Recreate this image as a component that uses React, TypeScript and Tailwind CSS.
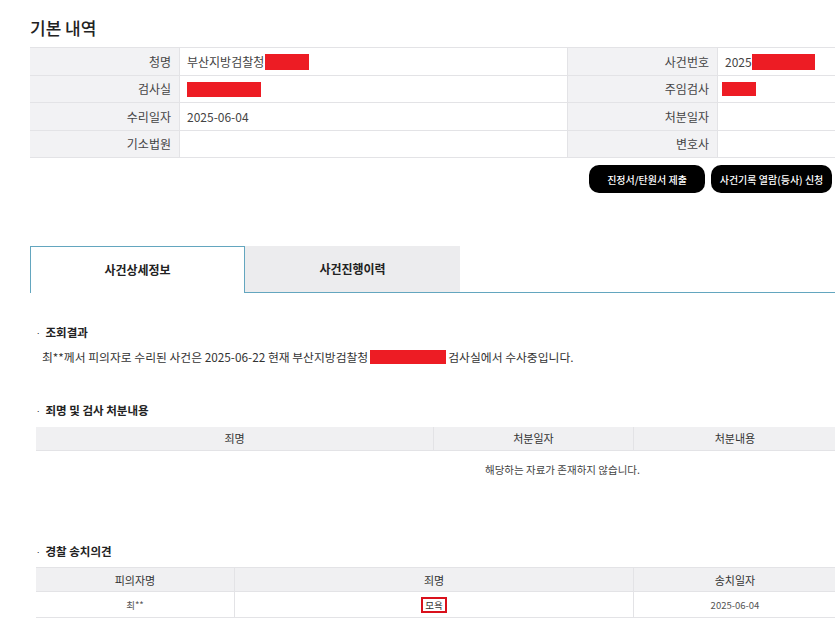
const FONT = "font-['Noto_Sans_CJK_KR','Noto_Sans',sans-serif]";

function Redact({ className }: { className: string }) {
  return <span className={`inline-block bg-[#ed1c24] ${className}`} />;
}

function InfoRow({
  label1,
  value1,
  label2,
  value2,
}: {
  label1: string;
  value1?: React.ReactNode;
  label2: string;
  value2?: React.ReactNode;
}) {
  const label =
    "flex items-center justify-end pr-[8px] bg-[#f2f2f4] text-[12px] text-[#444] border-b border-[#e3e3e6]";
  const value =
    "flex items-center pl-[7px] text-[12px] text-[#444] border-b border-[#e3e3e6]";
  return (
    <>
      <div className={`${label} border-r`}>{label1}</div>
      <div className={`${value} border-r`}>{value1}</div>
      <div className={`${label} border-r`}>{label2}</div>
      <div className={value}>{value2}</div>
    </>
  );
}

function SectionTitle({ children }: { children: React.ReactNode }) {
  return (
    <div className="flex items-center gap-[5px] pl-[36px] text-[11.5px] font-bold text-[#222]">
      <span className="text-[8px] font-normal">·</span>
      {children}
    </div>
  );
}

export default function App() {
  return (
    <div className={`w-[835px] h-[627px] overflow-hidden bg-white ${FONT}`}>
      <h1 className="pl-[30px] pt-[16px] text-[17px] font-medium text-[#222] leading-[24px]">
        기본 내역
      </h1>

      <div className="mt-[7px] ml-[30px] grid grid-cols-[150px_388px_150px_1fr] grid-rows-[28px_27px_28px_27px] border-t border-[#e3e3e6]">
        <InfoRow
          label1="청명"
          value1={
            <span className="flex items-center">
              부산지방검찰청
              <Redact className="w-[44px] h-[16px] ml-[1px]" />
            </span>
          }
          label2="사건번호"
          value2={
            <span className="flex items-center">
              2025
              <Redact className="w-[63px] h-[16px]" />
            </span>
          }
        />
        <InfoRow
          label1="검사실"
          value1={<Redact className="w-[74px] h-[15px]" />}
          label2="주임검사"
          value2={<Redact className="w-[34px] h-[14px] -ml-[3px]" />}
        />
        <InfoRow label1="수리일자" value1="2025-06-04" label2="처분일자" />
        <InfoRow label1="기소법원" label2="변호사" />
      </div>

      <div className="flex justify-end gap-[6px] pr-[3px] mt-[7px]">
        <button className="w-[116px] h-[28px] rounded-[10px] bg-black text-white text-[10px] font-medium">
          진정서/탄원서 제출
        </button>
        <button className="w-[121px] h-[28px] rounded-[10px] bg-black text-white text-[10px] font-medium">
          사건기록 열람(등사) 신청
        </button>
      </div>

      <div className="mt-[53px] ml-[30px] flex">
        <div className="w-[215px] h-[47px] flex items-center justify-center border border-b-0 border-[#63a6bf] bg-white text-[12px] font-bold text-[#222]">
          사건상세정보
        </div>
        <div className="flex-1 flex h-[47px] border-b border-[#63a6bf]">
          <div className="w-[215px] flex items-center justify-center bg-[#ececee] text-[12px] font-bold text-[#222]">
            사건진행이력
          </div>
        </div>
      </div>

      <div className="mt-[31px]">
        <SectionTitle>조회결과</SectionTitle>
        <p className="mt-[7px] pl-[42px] flex items-center text-[11.8px] text-[#333]">
          최**께서 피의자로 수리된 사건은 2025-06-22 현재 부산지방검찰청
          <Redact className="w-[76px] h-[14px] mx-[2px]" />
          검사실에서 수사중입니다.
        </p>
      </div>

      <div className="mt-[36px]">
        <SectionTitle>죄명 및 검사 처분내용</SectionTitle>
        <div className="mt-[8px] ml-[36px] w-[800px] text-[11px] text-[#333]">
          <div className="grid grid-cols-[398px_200px_1fr] h-[24px] bg-[#f0f0f2] border-b border-[#e3e3e6]">
            <div className="flex items-center justify-center border-r border-[#e3e3e6]">죄명</div>
            <div className="flex items-center justify-center border-r border-[#e3e3e6]">처분일자</div>
            <div className="flex items-center justify-center">처분내용</div>
          </div>
          <div className="h-[38px] flex items-center pl-[449px] text-[10.5px] text-[#444]">
            해당하는 자료가 존재하지 않습니다.
          </div>
        </div>
      </div>

      <div className="mt-[54px]">
        <SectionTitle>경찰 송치의견</SectionTitle>
        <div className="mt-[7px] ml-[36px] w-[800px] text-[11px] text-[#333] border-b border-[#e3e3e6]">
          <div className="grid grid-cols-[199px_399px_1fr] h-[25px] bg-[#f0f0f2] border-t border-b border-[#e3e3e6]">
            <div className="flex items-center justify-center border-r border-[#e3e3e6]">피의자명</div>
            <div className="flex items-center justify-center border-r border-[#e3e3e6]">죄명</div>
            <div className="flex items-center justify-center">송치일자</div>
          </div>
          <div className="grid grid-cols-[199px_399px_1fr] h-[25px] text-[9.5px] text-[#555]">
            <div className="flex items-center justify-center border-r border-[#e3e3e6]">최**</div>
            <div className="flex items-center justify-center border-r border-[#e3e3e6]">
              <span className="border-2 border-[#d9111c] px-[2px] leading-[12px] text-[#333]">모욕</span>
            </div>
            <div className="flex items-center justify-center">2025-06-04</div>
          </div>
        </div>
      </div>
    </div>
  );
}
